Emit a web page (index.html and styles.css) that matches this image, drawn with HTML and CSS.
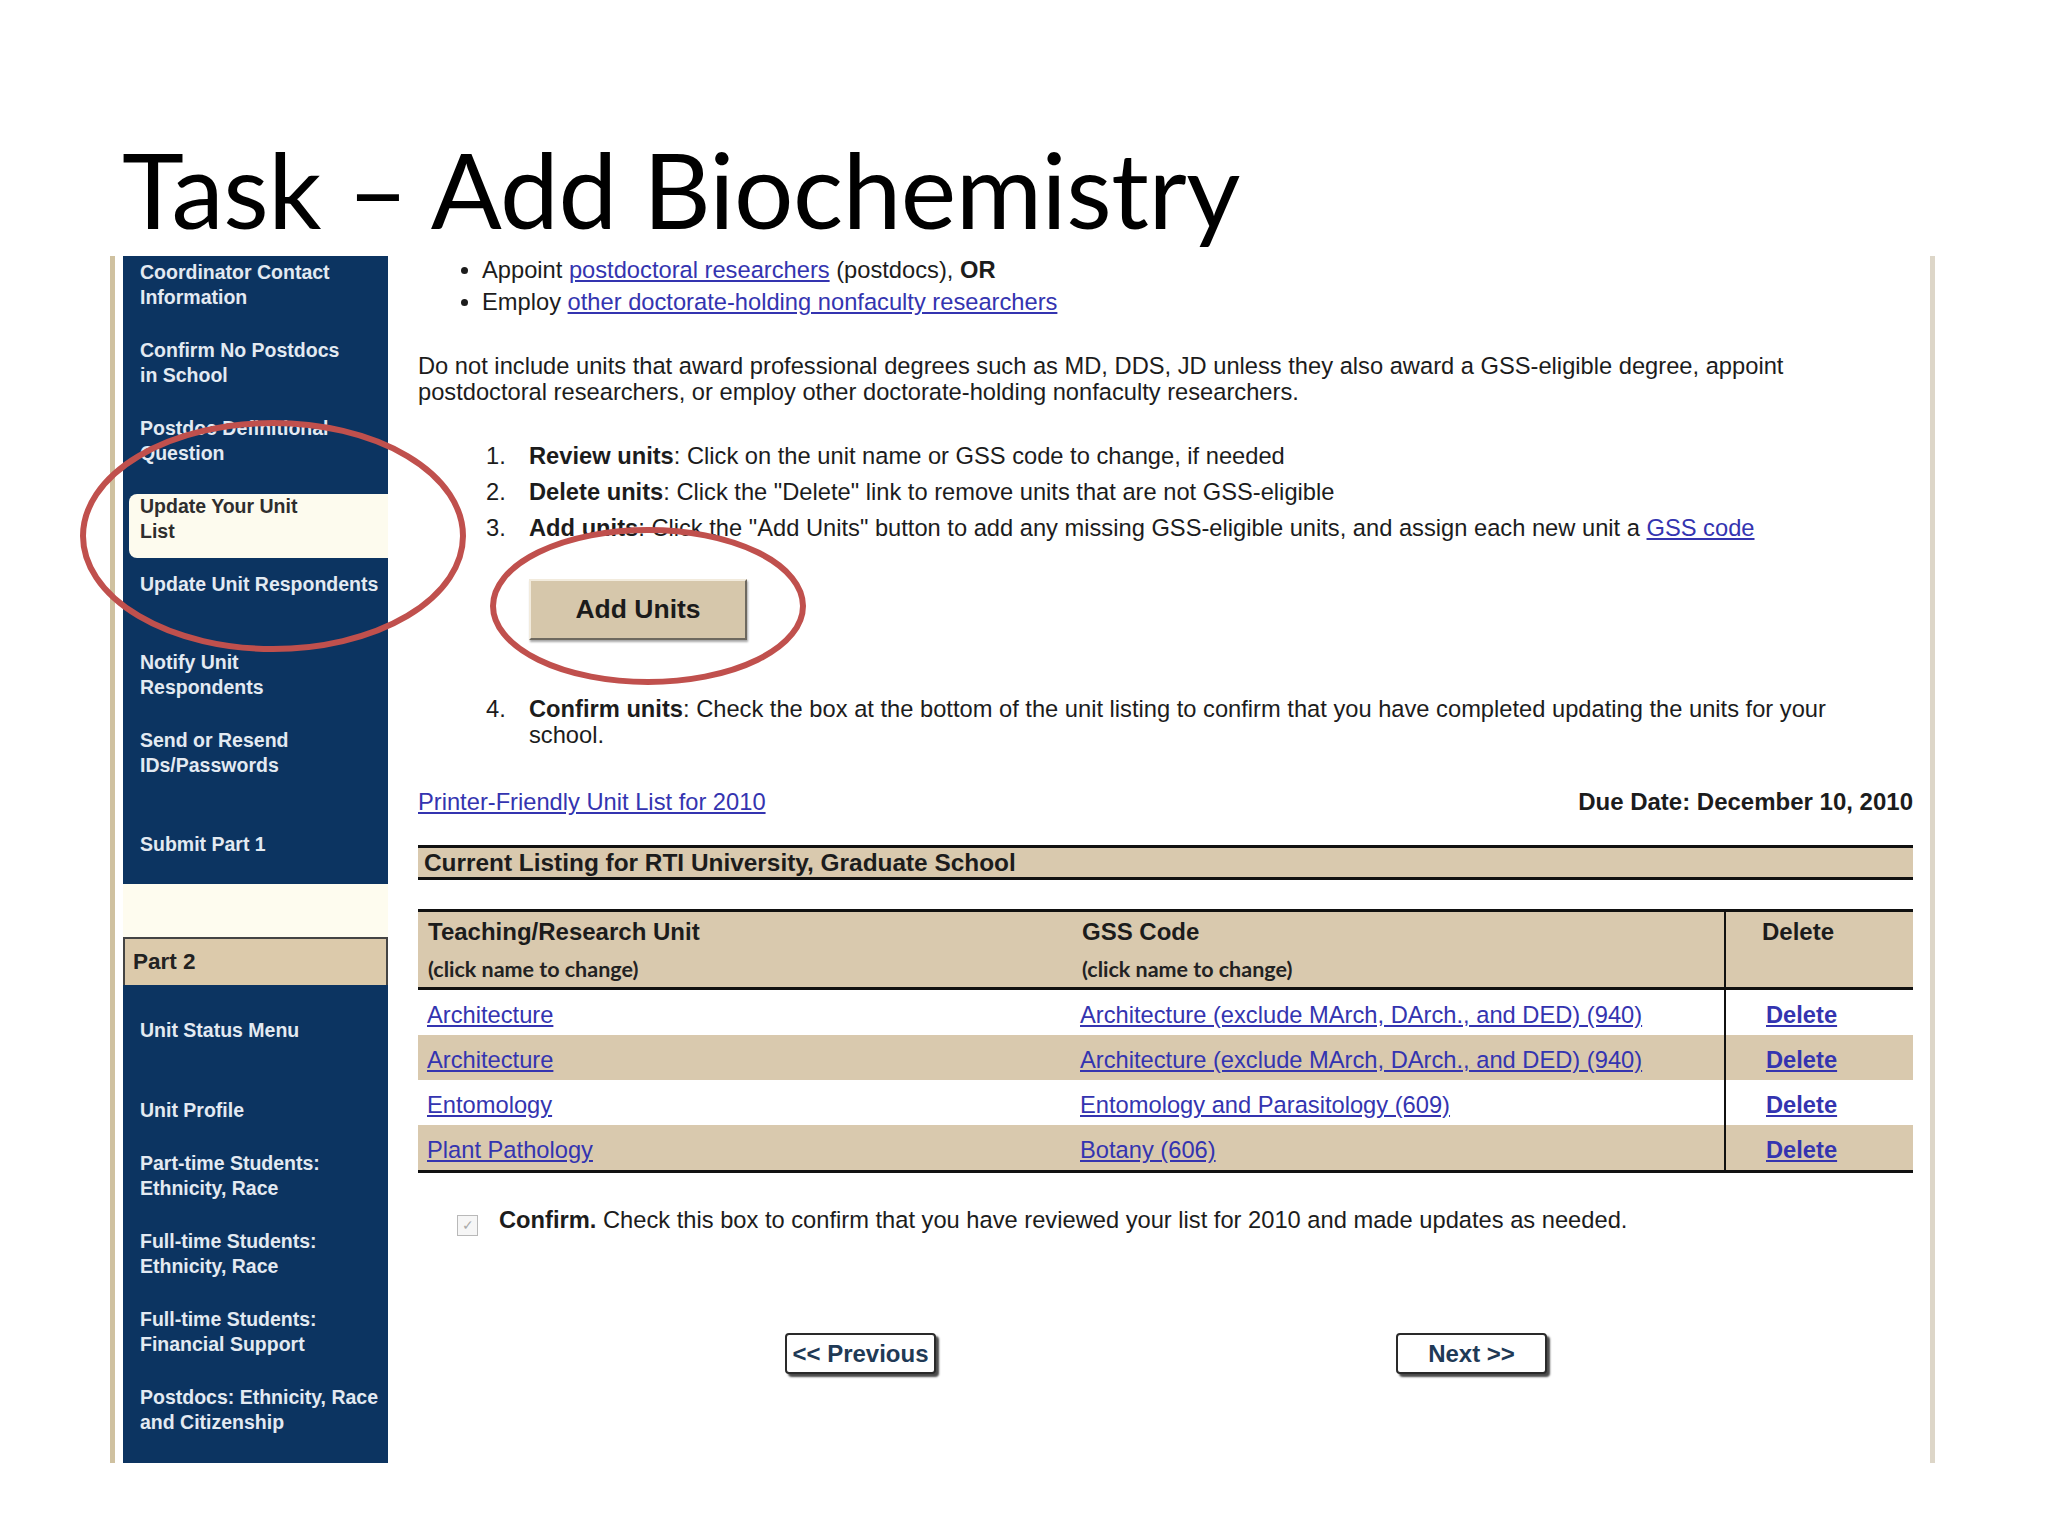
FILE: index.html
```html
<!DOCTYPE html>
<html lang="en">
<head>
<meta charset="utf-8">
<title>Task – Add Biochemistry</title>
<link rel="stylesheet" href="styles.css">
</head>
<body>
<h1 class="title">Task – Add Biochemistry</h1>
<div class="shot">
  <nav class="sidebar">
    <div class="part1">
      <div class="nav-item">Coordinator Contact<br>Information</div>
      <div class="nav-item">Confirm No Postdocs<br>in School</div>
      <div class="nav-item">Postdoc Definitional<br>Question</div>
      <div class="nav-item current">Update Your Unit<br>List</div>
      <div class="nav-item">Update Unit Respondents</div>
      <div class="nav-item">Notify Unit<br>Respondents</div>
      <div class="nav-item">Send or Resend<br>IDs/Passwords</div>
      <div class="nav-item submit">Submit Part 1</div>
    </div>
    <div class="side-gap"></div>
    <div class="part-head">Part 2</div>
    <div class="part2">
      <div class="nav-item first">Unit Status Menu</div>
      <div class="nav-item short">Unit Profile</div>
      <div class="nav-item">Part-time Students:<br>Ethnicity, Race</div>
      <div class="nav-item">Full-time Students:<br>Ethnicity, Race</div>
      <div class="nav-item">Full-time Students:<br>Financial Support</div>
      <div class="nav-item">Postdocs: Ethnicity, Race<br>and Citizenship</div>
    </div>
  </nav>
  <main class="content">
    <ul class="bullets">
      <li>Appoint <a href="#">postdoctoral researchers</a> (postdocs), <b>OR</b></li>
      <li>Employ <a href="#">other doctorate-holding nonfaculty researchers</a></li>
    </ul>
    <p class="note">Do not include units that award professional degrees such as MD, DDS, JD unless they also award a GSS-eligible degree, appoint<br>postdoctoral researchers, or employ other doctorate-holding nonfaculty researchers.</p>
    <ol class="steps">
      <li><span class="num">1.</span><span class="txt"><b>Review units</b>: Click on the unit name or GSS code to change, if needed</span></li>
      <li><span class="num">2.</span><span class="txt"><b>Delete units</b>: Click the "Delete" link to remove units that are not GSS-eligible</span></li>
      <li><span class="num">3.</span><span class="txt"><b>Add units</b>: Click the "Add Units" button to add any missing GSS-eligible units, and assign each new unit a <a href="#">GSS code</a></span></li>
    </ol>
    <div class="add-row"><button class="add-btn" type="button">Add Units</button></div>
    <ol class="steps step4">
      <li><span class="num">4.</span><span class="txt"><b>Confirm units</b>: Check the box at the bottom of the unit listing to confirm that you have completed updating the units for your<br>school.</span></li>
    </ol>
    <div class="meta-row">
      <a href="#">Printer-Friendly Unit List for 2010</a>
      <b>Due Date: December 10, 2010</b>
    </div>
    <div class="listing-bar">Current Listing for RTI University, Graduate School</div>
    <div class="units">
      <div class="hd"><div class="hd-main">Teaching/Research Unit</div><div class="hd-sub">(click name to change)</div></div>
      <div class="hd"><div class="hd-main">GSS Code</div><div class="hd-sub">(click name to change)</div></div>
      <div class="hd del-col del-hd"><div class="hd-main">Delete</div></div>

      <div class="c"><a href="#">Architecture</a></div>
      <div class="c"><a href="#">Architecture (exclude MArch, DArch., and DED) (940)</a></div>
      <div class="c del-col"><a class="del" href="#">Delete</a></div>

      <div class="c alt"><a href="#">Architecture</a></div>
      <div class="c alt"><a href="#">Architecture (exclude MArch, DArch., and DED) (940)</a></div>
      <div class="c alt del-col"><a class="del" href="#">Delete</a></div>

      <div class="c"><a href="#">Entomology</a></div>
      <div class="c"><a href="#">Entomology and Parasitology (609)</a></div>
      <div class="c del-col"><a class="del" href="#">Delete</a></div>

      <div class="c alt"><a href="#">Plant Pathology</a></div>
      <div class="c alt"><a href="#">Botany (606)</a></div>
      <div class="c alt del-col"><a class="del" href="#">Delete</a></div>
    </div>
    <div class="confirm-row">
      <span class="checkbox">✓</span>
      <span><b>Confirm.</b> Check this box to confirm that you have reviewed your list for 2010 and made updates as needed.</span>
    </div>
    <div class="nav-buttons">
      <button class="nav-btn" type="button">&lt;&lt; Previous</button>
      <button class="nav-btn" type="button">Next &gt;&gt;</button>
    </div>
  </main>
</div>
<svg class="annot" width="2048" height="1536" viewBox="0 0 2048 1536" aria-hidden="true">
  <ellipse cx="273" cy="536" rx="190" ry="113" fill="none" stroke="#c0504d" stroke-width="6"/>
  <ellipse cx="648" cy="606" rx="155" ry="76" fill="none" stroke="#c0504d" stroke-width="6"/>
</svg>
</body>
</html>
```

FILE: styles.css
```css
* { box-sizing: border-box; }
html, body { margin: 0; padding: 0; }
body {
  width: 2048px;
  height: 1536px;
  background: #ffffff;
  position: relative;
  overflow: hidden;
  font-family: "Liberation Sans", Arial, sans-serif;
  color: #1c1c1c;
}

/* Slide title */
.title {
  margin: 0;
  height: 256px;
  padding: 136px 0 0 122px;
  font-family: Lato, "Open Sans", sans-serif;
  font-weight: 400;
  font-size: 105px;
  line-height: 105px;
  letter-spacing: -0.5px;
  color: #000;
}

/* Embedded screenshot */
.shot {
  display: flex;
  margin-left: 110px;
  width: 1825px;
  height: 1207px;
  border-left: 5px solid #cfc1a0;
  border-right: 5px solid #ddd6c8;
  padding-left: 8px;
}

/* Sidebar */
.sidebar {
  flex: 0 0 265px;
  width: 265px;
  display: flex;
  flex-direction: column;
  background: #fefcef;
  font-size: 19.5px;
  font-weight: 700;
  line-height: 25px;
  color: #e3eaf2;
}
.part1 { background: #0c3461; }
.nav-item {
  height: 78px;
  padding: 3.5px 8px 0 17px;
  white-space: nowrap;
}
.nav-item.current {
  height: 64px;
  margin: 4px 0 10px 6px;
  padding: 0 8px 0 11px;
  background: #fdfbee;
  border-radius: 8px 0 0 8px;
  color: #2e2e2e;
}
.nav-item.submit {
  height: 82px;
  padding-top: 29.5px;
}
.side-gap {
  height: 54px;
  background: #fefcef;
}
.part-head {
  height: 48px;
  display: flex;
  align-items: center;
  padding-left: 8px;
  background: #dccaab;
  border: 2px solid #444;
  border-bottom: none;
  color: #222;
  font-size: 22.5px;
}
.part2 {
  flex: 1;
  background: #0c3461;
  padding-top: 33.5px;
}
.part2 .nav-item { padding-top: 0; }
.part2 .nav-item.first { height: 80px; }
.part2 .nav-item.short { height: 53px; }

/* Main content */
.content {
  flex: 0 0 1495px;
  width: 1495px;
  margin-left: 30px;
  font-size: 23.7px;
  line-height: 26px;
  color: #1c1c1c;
}
.content a { color: #3434b0; text-decoration: underline; }

.bullets {
  margin: -1px 0 0;
  padding-left: 64px;
  list-style: disc;
}
.bullets li { line-height: 30px; }
.bullets li + li { margin-top: 2px; }

.note { margin: 36px 0 0; white-space: nowrap; }

.steps {
  list-style: none;
  margin: 38px 0 0;
  padding-left: 68px;
}
.steps li { display: flex; }
.steps li + li { margin-top: 10px; }
.steps .num { flex: 0 0 43px; }
.steps .txt { white-space: nowrap; }
.steps.step4 { margin-top: 56px; }

.add-row {
  margin-top: 38px;
  padding-left: 111px;
}
.add-btn {
  width: 218px;
  height: 61px;
  background: #d6c7ab;
  border: 2px solid;
  border-color: #f2ebdd #6e695f #6e695f #f2ebdd;
  box-shadow: 1px 2px 2px rgba(0, 0, 0, 0.35);
  font-family: "Liberation Sans", Arial, sans-serif;
  font-weight: 700;
  font-size: 26.5px;
  color: #1b1b1b;
  padding: 0;
}

.meta-row {
  margin-top: 41px;
  display: flex;
  justify-content: space-between;
}
.meta-row b { font-size: 24px; }

.listing-bar {
  margin-top: 30px;
  height: 35px;
  border-top: 3px solid #111;
  border-bottom: 3px solid #111;
  background: #d9c9ae;
  padding-left: 6px;
  font-weight: 700;
  font-size: 24.4px;
  line-height: 29px;
}

.units {
  margin-top: 29px;
  display: grid;
  grid-template-columns: 654px 652px 189px;
  border-top: 3px solid #111;
  border-bottom: 3px solid #111;
}
.units .hd {
  height: 78px;
  background: #d9c9ae;
  border-bottom: 3px solid #111;
  padding: 7px 10px 0;
}
.hd-main { font-weight: 700; font-size: 24px; line-height: 26px; }
.hd-sub {
  margin-top: 13px;
  font-family: Lato, "Open Sans", sans-serif;
  font-weight: 700;
  font-size: 21.5px;
  line-height: 22px;
  color: #222;
}
.units .c {
  height: 45px;
  padding: 5px 8px 0 9px;
  display: flex;
  align-items: center;
}
.units .c:nth-child(3n+2) { padding-left: 8px; }
.units .alt { background: #d9c9ae; }
.units .del-col { border-left: 2px solid #111; }
.units .hd.del-hd { padding-left: 36px; }
.units .c.del-col { padding-left: 40px; }
.del { font-weight: 700; }

.confirm-row {
  margin-top: 34px;
  display: flex;
  align-items: flex-start;
  gap: 21px;
  padding-left: 39px;
}
.checkbox {
  flex: 0 0 21px;
  width: 21px;
  height: 21px;
  margin-top: 8px;
  border: 1px solid #b9b9b9;
  background: #f6f6f6;
  color: #a9a9a9;
  font-size: 14px;
  line-height: 19px;
  text-align: center;
}

.nav-buttons {
  margin-top: 97px;
  display: flex;
  gap: 460px;
  padding-left: 367px;
}
.nav-btn {
  width: 151px;
  height: 41px;
  padding: 0;
  background: #ffffff;
  border: 2px solid #2a2a2a;
  border-radius: 4px;
  box-shadow: 3px 3px 2px #4a4a4a;
  font-family: "Liberation Sans", Arial, sans-serif;
  font-weight: 700;
  font-size: 24px;
  color: #1f3a56;
}

/* Red annotation ellipses drawn over the screenshot */
.annot {
  position: absolute;
  top: 0;
  left: 0;
  pointer-events: none;
}
```
